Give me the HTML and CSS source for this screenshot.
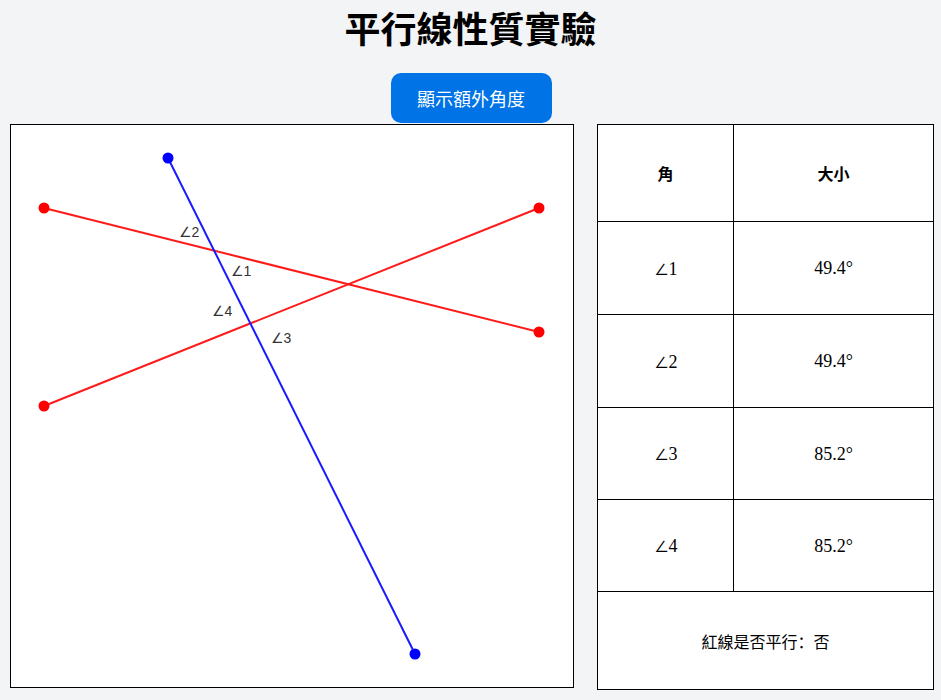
FILE: index.html
```html
<!DOCTYPE html>
<html lang="zh-Hant">
<head>
<meta charset="utf-8">
<title>平行線性質實驗</title>
<link rel="stylesheet" href="styles.css">
</head>
<body>
<h1 class="title">平行線性質實驗</h1>
<div class="actions">
  <button class="btn" type="button">顯示額外角度</button>
</div>
<div class="main">
  <div class="board">
    <svg width="562" height="562" viewBox="0 0 562 562" xmlns="http://www.w3.org/2000/svg">
      <line x1="33" y1="83" x2="528" y2="207" stroke="#ff1a1a" stroke-width="2"/>
      <line x1="33" y1="281" x2="528" y2="83" stroke="#ff1a1a" stroke-width="2"/>
      <line x1="157" y1="33" x2="404" y2="529" stroke="#1a1aff" stroke-width="2"/>
      <circle cx="33" cy="83" r="5.5" fill="#ff0000"/>
      <circle cx="528" cy="207" r="5.5" fill="#ff0000"/>
      <circle cx="33" cy="281" r="5.5" fill="#ff0000"/>
      <circle cx="528" cy="83" r="5.5" fill="#ff0000"/>
      <circle cx="157" cy="33" r="5.5" fill="#0000ff"/>
      <circle cx="404" cy="529" r="5.5" fill="#0000ff"/>
      <g class="lbl">
        <text x="168" y="112"><tspan class="ang">∠</tspan>2</text>
        <text x="220" y="151"><tspan class="ang">∠</tspan>1</text>
        <text x="201" y="191"><tspan class="ang">∠</tspan>4</text>
        <text x="260" y="218"><tspan class="ang">∠</tspan>3</text>
      </g>
    </svg>
  </div>
  <div class="table">
    <div class="cell head c1">角</div>
    <div class="cell head c2">大小</div>
    <div class="cell r2 c1 math">∠1</div>
    <div class="cell r2 c2 math">49.4°</div>
    <div class="cell r3 c1 math">∠2</div>
    <div class="cell r3 c2 math">49.4°</div>
    <div class="cell r4 c1 math">∠3</div>
    <div class="cell r4 c2 math">85.2°</div>
    <div class="cell r5 c1 math">∠4</div>
    <div class="cell r5 c2 math">85.2°</div>
    <div class="cell foot" lang="zh-Hans">紅線是否平行：否</div>
  </div>
</div>
</body>
</html>
```

FILE: styles.css
```css
html, body {
  margin: 0;
  padding: 0;
}
body {
  background: #f3f4f6;
  font-family: "Noto Sans CJK TC", "Noto Sans", sans-serif;
  color: #000;
  height: 700px;
  overflow: hidden;
}
.title {
  margin: 6px 0 0;
  font-size: 36px;
  line-height: 43px;
  font-weight: 700;
  text-align: center;
}
.actions {
  display: flex;
  justify-content: center;
  margin-top: 24px;
  padding-left: 1px;
}
.btn {
  background: #0073e6;
  color: #fff;
  border: none;
  border-radius: 10px;
  font-family: "Noto Sans CJK TC", sans-serif;
  font-size: 18px;
  line-height: 22px;
  padding: 14px 26px;
  width: 161px;
  height: 50px;
}
.main {
  display: flex;
  align-items: flex-start;
  gap: 23px;
  margin-top: 1px;
  padding-left: 10px;
}
.board {
  border: 1px solid #000;
  background: #fff;
  width: 562px;
  height: 562px;
}
.board svg {
  display: block;
}
.lbl text {
  font-family: "Liberation Sans", Arial, sans-serif;
  font-size: 14px;
  fill: #333;
}
.lbl .ang {
  font-family: "DejaVu Sans", sans-serif;
}
.table {
  display: grid;
  grid-template-columns: 136px 199px;
  grid-template-rows: 97px 93px 93px 92px 92px 97px;
  border: 1px solid #000;
  background: #fff;
}
.cell {
  box-sizing: border-box;
  display: flex;
  align-items: center;
  justify-content: center;
  border-bottom: 1px solid #000;
  font-size: 16px;
}
.c1 {
  border-right: 1px solid #000;
}
.head {
  font-weight: 700;
  font-size: 16px;
}
.math {
  font-family: "Liberation Serif", "Times New Roman", serif;
  font-size: 18px;
  padding-top: 1px;
}
.foot {
  grid-column: 1 / span 2;
  border-bottom: none;
  font-family: "Noto Sans CJK SC", "Noto Sans CJK TC", sans-serif;
  font-size: 16px;
}
```
